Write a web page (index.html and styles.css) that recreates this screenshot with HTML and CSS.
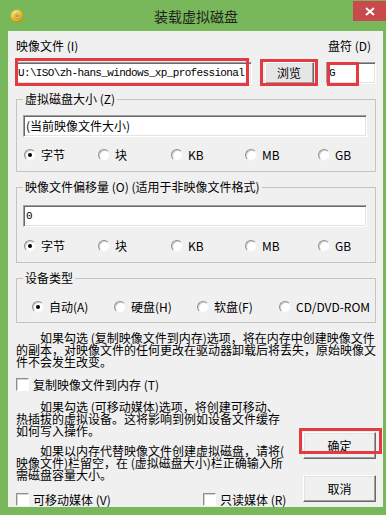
FILE: index.html
```html
<!DOCTYPE html>
<html lang="zh-CN">
  <head>
    <meta charset="UTF-8" />
    <meta name="viewport" content="width=device-width, initial-scale=1.0" />
    <title>装载虚拟磁盘</title>
    <link rel="stylesheet" href="styles.css">
  </head>
  <body>
    <div class="window">
      <div class="titlebar">
        <svg class="app-icon" viewBox="0 0 14 14" width="14" height="14">
          <defs>
            <radialGradient id="disc" cx="40%" cy="35%" r="70%">
              <stop offset="0" stop-color="#fff3a0" />
              <stop offset="0.5" stop-color="#f2c42c" />
              <stop offset="1" stop-color="#b8860b" />
            </radialGradient>
          </defs>
          <circle cx="7" cy="7" r="6.5" fill="url(#disc)" />
          <circle cx="7" cy="7" r="2.4" fill="#e9e2b8" stroke="#a57c12" stroke-width="0.8" />
          <circle cx="7" cy="7" r="0.9" fill="#6d6d6d" />
        </svg>
        <div class="title">装载虚拟磁盘</div>
        <button class="close" title="关闭">
          <svg viewBox="0 0 10 9" width="10" height="9">
            <path d="M1 1 L9 8 M9 1 L1 8" stroke="#fff" stroke-width="2" />
          </svg>
        </button>
      </div>

      <div class="client">
        <!-- image file + drive letter -->
        <div class="file-row">
          <label class="caption">映像文件 (I)</label>
          <label class="caption drive-label">盘符 (D)</label>
          <div class="edit mono mark-path">
            <span class="val">U:\ISO\zh-hans_windows_xp_professional.</span>
          </div>
          <button class="btn browse mark-browse">浏览</button>
          <div class="edit mono mark-drive"><span class="val">G</span></div>
        </div>

        <fieldset class="group size-group">
          <legend>虚拟磁盘大小 (Z)</legend>
          <div class="edit"><span class="val">(当前映像文件大小)</span></div>
          <div class="units">
            <label class="opt"><span class="radio on"></span>字节</label>
            <label class="opt"><span class="radio"></span>块</label>
            <label class="opt"><span class="radio"></span>KB</label>
            <label class="opt"><span class="radio"></span>MB</label>
            <label class="opt"><span class="radio"></span>GB</label>
          </div>
        </fieldset>

        <fieldset class="group offset-group">
          <legend>映像文件偏移量 (O) (适用于非映像文件格式)</legend>
          <div class="edit mono"><span class="val">0</span></div>
          <div class="units">
            <label class="opt"><span class="radio on"></span>字节</label>
            <label class="opt"><span class="radio"></span>块</label>
            <label class="opt"><span class="radio"></span>KB</label>
            <label class="opt"><span class="radio"></span>MB</label>
            <label class="opt"><span class="radio"></span>GB</label>
          </div>
        </fieldset>

        <fieldset class="group device-group">
          <legend>设备类型</legend>
          <div class="devices">
            <label class="opt"><span class="radio on"></span>自动(A)</label>
            <label class="opt"><span class="radio"></span>硬盘(H)</label>
            <label class="opt"><span class="radio"></span>软盘(F)</label>
            <label class="opt"><span class="radio"></span>CD/DVD-ROM</label>
          </div>
        </fieldset>

        <p class="note">如果勾选 (复制映像文件到内存)选项，将在内存中创建映像文件<br>的副本，对映像文件的任何更改在驱动器卸载后将丢失，原始映像文<br>件不会发生改变。</p>

        <label class="check copy-check"><span class="box"></span>复制映像文件到内存 (T)</label>

        <div class="lower">
          <div class="lower-text">
            <p class="note">如果勾选 (可移动媒体)选项，将创建可移动、<br>热插拔的虚拟设备。这将影响到例如设备文件缓存<br>如何写入操作。</p>
            <p class="note second">如果以内存代替映像文件创建虚拟磁盘，请将(<br>映像文件)栏留空，在 (虚拟磁盘大小)栏正确输入所<br>需磁盘容量大小。</p>
            <div class="checks">
              <label class="check"><span class="box"></span>可移动媒体 (V)</label>
              <label class="check"><span class="box"></span>只读媒体 (R)</label>
            </div>
          </div>
          <div class="actions">
            <button class="btn mark-ok">确定</button>
            <button class="btn">取消</button>
          </div>
        </div>
      </div>
    </div>
  </body>
</html>
```

FILE: styles.css
```css
:root {
  --frame: #79b85a;
  --face: #f0f0f0;
  --mark: #e43b40;
  --shade: #a0a0a0;
  --dark: #696969;
}

* {
  margin: 0;
  padding: 0;
  box-sizing: border-box;
}

body {
  width: 386px;
  height: 515px;
  overflow: hidden;
  background: var(--frame);
  font-family: "Noto Sans CJK SC", "Noto Sans", sans-serif;
  font-size: 12px;
  line-height: 12px;
  color: #000;
}

.window {
  width: 386px;
  height: 515px;
  display: flex;
  flex-direction: column;
  background: var(--frame);
}

/* title bar */
.titlebar {
  height: 31px;
  display: grid;
  grid-template-columns: 1fr auto 1fr;
  align-items: start;
}

.app-icon {
  margin: 9px 0 0 10px;
}

.title {
  padding: 8px 0 0 6px;
  font-size: 14px;
  line-height: 16px;
  color: #1e1e1e;
}

.close {
  justify-self: end;
  width: 33px;
  height: 20px;
  margin-top: 1px;
  border: 0;
  background: #c94a4c;
  display: flex;
  align-items: center;
  justify-content: center;
}

/* client area */
.client {
  flex: 1;
  margin: 0 3px 8px 8px;
  padding: 9px 7px 0 8px;
  background: var(--face);
  display: flex;
  flex-direction: column;
}

.file-row {
  display: grid;
  grid-template-columns: 236px 49px 50px;
  grid-template-rows: 12px 22px;
  row-gap: 10px;
  justify-content: space-between;
}

.drive-label {
  grid-column: 3;
  padding-left: 2px;
}

.edit {
  position: relative;
  height: 22px;
  padding: 0 2px;
  background: #fff;
  border: 1px solid;
  border-color: var(--shade) #fff #fff var(--shade);
  box-shadow: inset 1px 1px 0 var(--dark), inset -1px -1px 0 #e3e3e3;
  line-height: 20px;
}

.edit .val {
  display: block;
  white-space: nowrap;
}

.mono {
  font-family: "Liberation Mono", monospace;
  font-size: 11px;
  letter-spacing: -0.65px;
}

.mark-path {
  padding-left: 1px;
}

.btn {
  position: relative;
  width: 73px;
  height: 27px;
  background: var(--face);
  border: 1px solid;
  border-color: #fff var(--dark) var(--dark) #fff;
  box-shadow: inset -1px -1px 0 var(--shade), inset 1px 1px 0 #e3e3e3;
  font: inherit;
  color: #000;
}

.browse {
  width: 49px;
  height: 22px;
  background: #e6e6e6;
}

/* red annotation boxes */
.mark-path::after,
.mark-browse::after,
.mark-drive::after,
.mark-ok::after {
  content: "";
  position: absolute;
  border: 3px solid var(--mark);
}

.mark-path::after {
  top: -5px;
  bottom: -3px;
  left: -2px;
  right: 2px;
}

.mark-browse::after {
  top: -4px;
  bottom: -3px;
  left: -6px;
  right: -5px;
}

.mark-drive::after {
  top: -1px;
  bottom: -3px;
  left: 0;
  width: 26px;
}

.mark-ok::after {
  top: -5px;
  bottom: 4px;
  left: -5px;
  right: -7px;
}

/* group boxes */
.group {
  margin-top: 9px;
  padding: 10px 8px 10px 6px;
  min-width: 0;
  border: 1px solid #c4c4c4;
}

.group legend {
  padding: 0 2px;
  line-height: 12px;
}

.offset-group {
  padding-top: 12px;
}

.device-group {
  padding-top: 16px;
  padding-bottom: 9px;
}

.units {
  margin-top: 11px;
  display: grid;
  grid-template-columns: 74px 73px 74px 73px auto;
  padding-left: 1px;
}

.offset-group .units {
  margin-top: 12px;
}

.devices {
  display: grid;
  grid-template-columns: 82px 83px 82px auto;
  padding-left: 9px;
}

.opt {
  display: flex;
  align-items: center;
  gap: 5px;
  height: 13px;
  white-space: nowrap;
}

.radio {
  position: relative;
  flex: none;
  width: 12px;
  height: 12px;
  border-radius: 50%;
  background: #fff;
  border: 1px solid;
  border-color: #8f8f8f #f2f2f2 #f2f2f2 #8f8f8f;
  box-shadow: inset 1px 1px 0 #cfcfcf;
}

.radio.on::after {
  content: "";
  position: absolute;
  top: 3px;
  left: 3px;
  width: 4px;
  height: 4px;
  border-radius: 50%;
  background: #000;
}

/* notes and check boxes */
.note {
  margin-top: 9px;
  text-indent: 24px;
  white-space: nowrap;
  line-height: 12px;
}

.check {
  display: flex;
  align-items: center;
  gap: 4px;
  height: 13px;
  white-space: nowrap;
}

.box {
  flex: none;
  width: 13px;
  height: 13px;
  background: #fff;
  border: 1px solid;
  border-color: #8f8f8f #fff #fff #8f8f8f;
  box-shadow: inset 1px 1px 0 #d2d2d2;
}

.copy-check {
  margin-top: 10px;
}

.lower {
  flex: 1;
  margin-top: 10px;
  display: flex;
}

.lower .note {
  margin-top: 0;
}

.lower .note.second {
  margin-top: 8px;
}

.checks {
  margin-top: 12px;
  display: grid;
  grid-template-columns: 187px auto;
}

.actions {
  margin-left: auto;
  padding-bottom: 5px;
  display: flex;
  flex-direction: column;
  justify-content: flex-end;
  gap: 16px;
}
```
